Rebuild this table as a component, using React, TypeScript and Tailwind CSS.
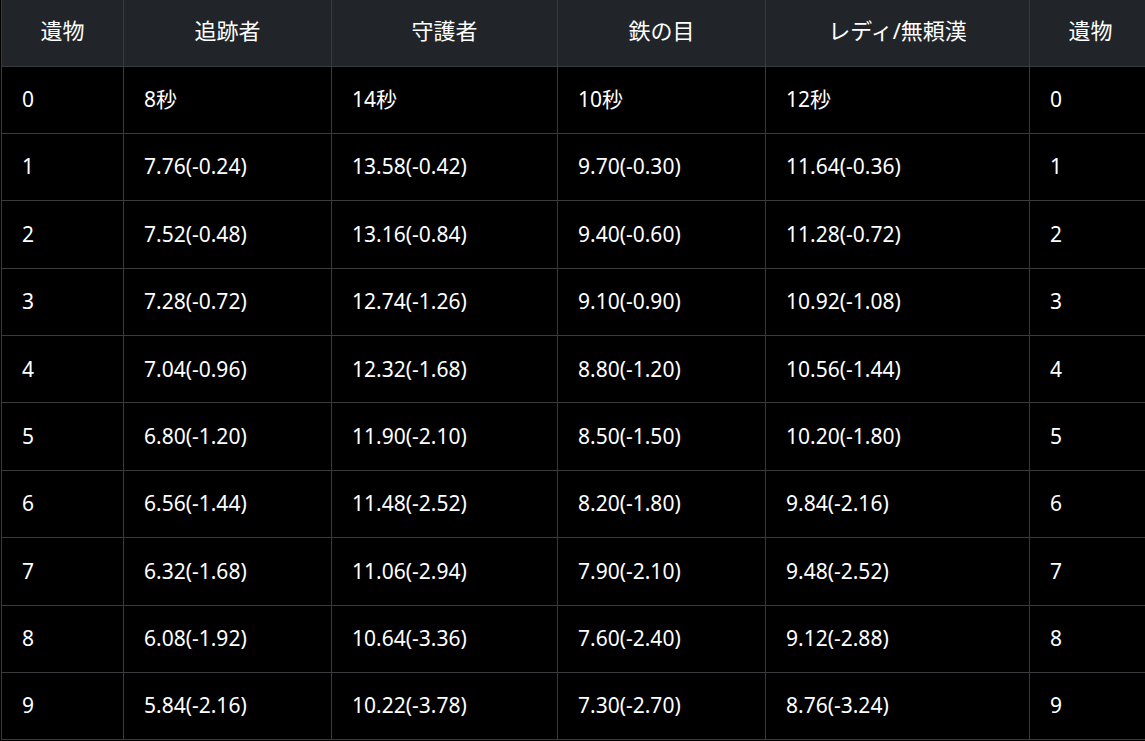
import React from "react";

const headers = ["遺物", "追跡者", "守護者", "鉄の目", "レディ/無頼漢", "遺物"];
const widths = ["w-[122px]", "w-[208px]", "w-[226px]", "w-[208px]", "w-[264px]", "w-[122px]"];

const rows: string[][] = [
  ["0", "8秒", "14秒", "10秒", "12秒", "0"],
  ["1", "7.76(-0.24)", "13.58(-0.42)", "9.70(-0.30)", "11.64(-0.36)", "1"],
  ["2", "7.52(-0.48)", "13.16(-0.84)", "9.40(-0.60)", "11.28(-0.72)", "2"],
  ["3", "7.28(-0.72)", "12.74(-1.26)", "9.10(-0.90)", "10.92(-1.08)", "3"],
  ["4", "7.04(-0.96)", "12.32(-1.68)", "8.80(-1.20)", "10.56(-1.44)", "4"],
  ["5", "6.80(-1.20)", "11.90(-2.10)", "8.50(-1.50)", "10.20(-1.80)", "5"],
  ["6", "6.56(-1.44)", "11.48(-2.52)", "8.20(-1.80)", "9.84(-2.16)", "6"],
  ["7", "6.32(-1.68)", "11.06(-2.94)", "7.90(-2.10)", "9.48(-2.52)", "7"],
  ["8", "6.08(-1.92)", "10.64(-3.36)", "7.60(-2.40)", "9.12(-2.88)", "8"],
  ["9", "5.84(-2.16)", "10.22(-3.78)", "7.30(-2.70)", "8.76(-3.24)", "9"],
];

export default function App() {
  return (
    <div className="w-[1145px] h-[741px] overflow-hidden bg-black pl-px font-['Noto_Sans','Noto_Sans_CJK_JP',sans-serif] text-white">
      <table className="table-fixed border-collapse w-[1150px] text-[21px]">
        <colgroup>
          {widths.map((w, i) => (
            <col key={i} className={w} />
          ))}
        </colgroup>
        <thead>
          <tr className="h-[66px] bg-[#212529]">
            {headers.map((h, i) => (
              <th
                key={i}
                className="border-x border-b border-[#373b3e] font-normal text-center align-middle pb-[4px] text-[22px]"
              >
                {h}
              </th>
            ))}
          </tr>
        </thead>
        <tbody>
          {rows.map((r, ri) => (
            <tr key={ri} className="h-[67.4px]">
              {r.map((c, ci) => (
                <td
                  key={ci}
                  className="border border-[#373b3e] px-5 text-left align-middle"
                >
                  {c}
                </td>
              ))}
            </tr>
          ))}
        </tbody>
      </table>
    </div>
  );
}
